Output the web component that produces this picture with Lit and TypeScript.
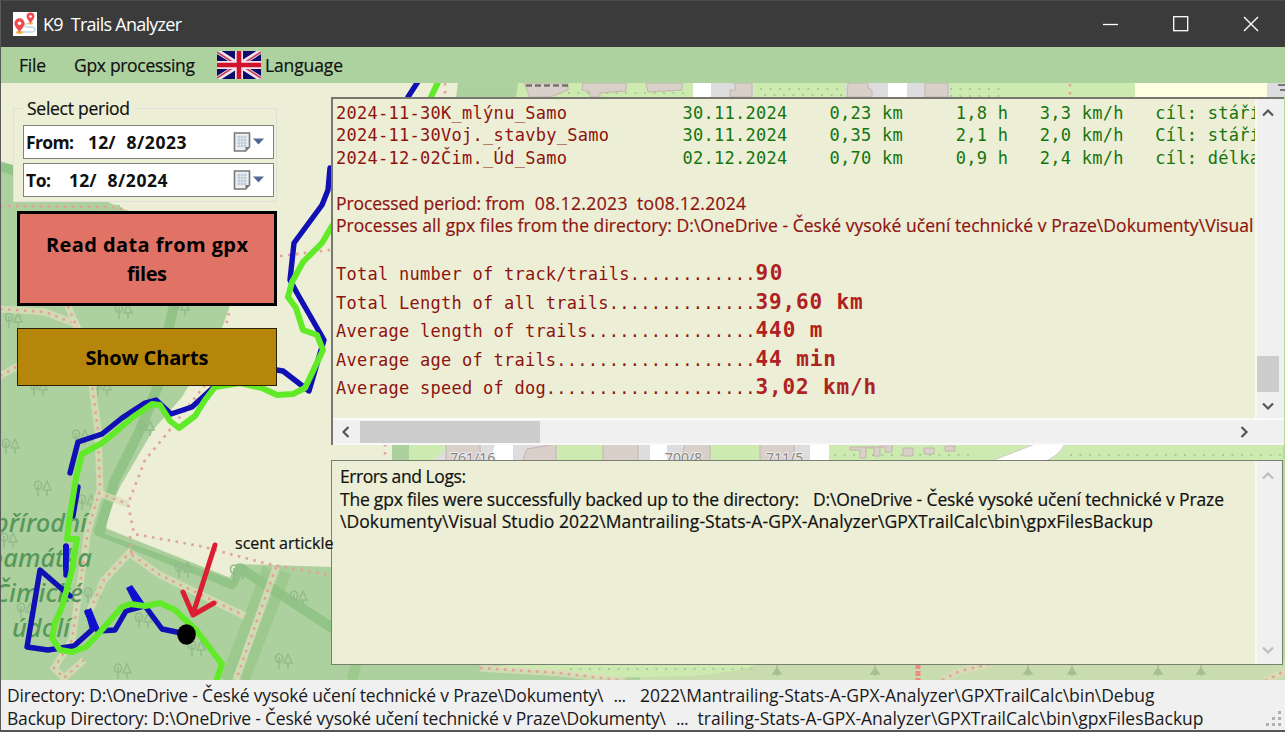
import { LitElement, html, css, svg } from "lit";
import { customElement, property } from "lit/decorators.js";

/** Text run whose tracking is adjusted so that it spans exactly `w` pixels. */
@customElement("fit-text")
class FitText extends LitElement {
  @property({ type: Number }) w = 0;
  @property() text = "";
  static styles = css`
    :host { display: inline-block; white-space: pre; flex: none; }
    span { display: inline-block; }
  `;
  firstUpdated() {
    const s = this.renderRoot.querySelector("span") as HTMLElement;
    const n = this.text.length;
    const natural = s.getBoundingClientRect().width;
    if (n > 1) s.style.letterSpacing = (this.w - natural) / (n - 1) + "px";
    this.style.width = this.w + "px";
  }
  render() {
    return html`<span>${this.text}</span>`;
  }
}

const t = (text: string, w: number) => html`<fit-text .w=${w} .text=${text}></fit-text>`;

/** Map background: woodland, field, paths, houses and the recorded tracks. */
@customElement("trail-map")
class TrailMap extends LitElement {
  static styles = css`
    :host { display: block; }
    svg { display: block; width: 100%; height: 100%; }
    .label { font: italic 500 25.5px "Noto Sans", sans-serif; fill: #56985a; text-anchor: end; }
    .num { font: 14px "Noto Sans", sans-serif; fill: #8b8582; stroke: #eee; stroke-width: 2px; paint-order: stroke; }
    .tree { fill: none; stroke: #93bb8a; stroke-width: 1.5; }
    .way { fill: none; stroke: #dcdcb9; stroke-width: 7; opacity: 0.75; }
    .dots { fill: none; stroke: #e2a398; stroke-width: 2.6; stroke-dasharray: 2.6 5.4; }
    .band { fill: none; stroke: #7fba77; opacity: 0.6; stroke-width: 10; stroke-linejoin: round; }
    .soft { fill: none; stroke: #8fc284; opacity: 0.55; stroke-width: 11; }
    .blue { fill: none; stroke: #1010b4; stroke-width: 5.4; stroke-linejoin: round; stroke-linecap: round; }
    .green { fill: none; stroke: #60ea28; stroke-width: 6; stroke-linejoin: round; stroke-linecap: round; }
    .arrow { fill: none; stroke: #dc1e32; stroke-width: 5; stroke-linecap: round; stroke-linejoin: round; }
    .house { fill: #d9d0c9; stroke: #c4b4ac; stroke-width: 1; }
    .yard { fill: #dddde0; }
    .meadow { fill: #cdebb0; }
    .grass { fill: none; stroke: #a8cf8e; stroke-width: 2; stroke-dasharray: 2 7.5; }
  `;
  tree(x: number, y: number) {
    return svg`<path class="tree" d="M${x - 4} ${y - 7}a3.6 4.2 0 1 0 .1 0M${x - 4} ${y - 4}v12M${x + 5} ${y - 7}l-4 9h8zM${x + 5} ${y + 2}v6"/>`;
  }
  path(d: string) {
    return svg`<path class="way" d=${d}/><path class="dots" d=${d}/>`;
  }
  render() {
    const trees = [[13, 320], [123, 311], [180, 308], [38, 388], [102, 388], [10, 446], [80, 437], [145, 428], [42, 488],
      [86, 502], [8, 540], [183, 570], [238, 572], [298, 598], [92, 595], [122, 671], [283, 661], [143, 620], [196, 648], [25, 610]];
    const conifers = [777, 875, 1028, 1158, 1201, 1072];
    return html`<svg viewBox="0 83 1285 597" preserveAspectRatio="none">
      <rect x="0" y="83" width="1285" height="597" fill="#add19e"/>
      <path fill="#eceed5" d="M0 83H460L440 460H391V567H333L236 564L232 580L105 534Q110 505 122 483L153 430L182 397L222 328L232 300L240 214H120V205H0Z"/>
      <path fill="#add19e" d="M0 163Q60 170 110 203L135 214H234L229 306L220 328L200 370L153 430L122 483L0 500Z"/>
      <path class="band" d="M0 166L15 171"/>
      <path class="band" d="M175 300L165 345L158 386L140 430L115 480L99 531L232 584L240 568L340 633"/>
      <path class="soft" d="M268 568L226 680M286 572L244 680"/>
      <path class="soft" d="M356 664L352 680"/>
      ${trees.map(([x, y]) => this.tree(x, y))}
      ${this.path("M0 309L45 312L76 324L90 370L98 430L100 490L88 530L72 640L54 668L64 678L84 660")}
      ${this.path("M68 306L78 330")}
      ${this.path("M0 376L18 366")}
      ${this.path("M98 493L128 504")}
      ${this.path("M132 550L104 580L90 610")}
      ${this.path("M132 555L160 575L245 616")}
      ${this.path("M276 567L236 680")}
      <path class="dots" d="M229 313L224 334M205 385L165 436L145 460L128 504L134 534L200 546L268 564L340 577M130 536L132 555M0 206L110 207L128 210M280 256L330 250"/>
      <text class="label" x="87" y="532">přírodní</text>
      <text class="label" x="92" y="567">památka</text>
      <text class="label" x="83" y="602">Čimické</text>
      <text class="label" x="70" y="637">údolí</text>

      <path fill="#add19e" d="M458 83H520V97H456Z"/>
      <path class="dots" d="M445 83V97M385 444V462"/>
      <path class="meadow" d="M518 83H1135V97H516Z"/>
      <path class="grass" d="M530 93H690M760 89H850M764 95H850M950 89H1000M950 96H1000"/>
      <path class="house" d="M524 83H568V90L550 97H530ZM583 83H626V91L600 93V97H590V92L582 90ZM646 83H682V90L648 92Z"/>
      <path fill="#fff" d="M693 83H711V97H693ZM888 83H907V97H888Z"/>
      <path class="yard" d="M711 83H754V97H711ZM846 83H888V97H846ZM907 83H950V97H907Z"/>
      <path class="house" d="M734 83H752V97H730V90H736ZM848 83H868V88L872 90V97H847ZM925 83H948V97H925Z"/>
      <path d="M526 85.500H568" stroke="#77706c" stroke-width="2.500" stroke-dasharray="6 3"/>
      <path class="dots" d="M1070 84V97"/>
      <path fill="#fffee0" d="M1135 83H1267V97H1135Z"/>
      <path fill="#dddde0" d="M1267 83H1285V97H1267Z"/>
      <path d="M1278 85h7M1280 90h5" stroke="#777" stroke-width="2"/>

      <path class="meadow" d="M421 444H1285V462H421Z"/>
      <path fill="#add19e" d="M392 444H409V462H392Z"/>
      <path class="grass" d="M412 455H430M560 455H603M712 455H760M834 455H975M1070 455H1285"/>
      <path class="meadow" d="M409 444H430V462H409Z"/>
      <path class="yard" d="M455 444H495V462H430ZM514 444H650V462H514ZM668 444H810V462H668Z"/>
      <path class="meadow" d="M558 444H603V462H558ZM710 444H760V462H710Z"/>
      <path class="house" d="M446 444H480V462H446ZM527 449L556 444V462H522ZM603 444H638V462H603ZM685 444H710V462H680ZM760 444H794V462H760Z"/>
      <path fill="#fff" d="M495 444H513V462H490ZM650 444H667V462H650ZM810 444H829V462H810Z"/>
      <text class="num" x="450" y="463">761/16</text>
      <text class="num" x="665" y="463">700/8</text>
      <text class="num" x="766" y="463">711/5</text>
      <path class="house" d="M850 447H885V452H892V444H880V456H874V448H866V458H860V450H850ZM903 448H913V456H903ZM924 448H934V454H924ZM945 446H955V451H945Z"/>
      <path fill="#fff" stroke="#d0ccca" d="M989 462L1035 444H1065Q1058 457 1043 462Z"/>
      <rect x="1283" y="97" width="2" height="567" fill="#b9d8a0"/>

      <path fill="#c8dcae" d="M640 660H1285V680H640Z"/>
      <path class="meadow" d="M520 662H765Q740 672 690 676L600 678Q560 670 490 668Z"/>
      <path class="grass" d="M570 669H760"/>
      ${this.path("M480 668L560 673L625 681")}
      ${this.path("M942 680L960 671L990 664")}
      ${this.path("M1265 681L1285 671")}
      <path d="M918 664V680" stroke="#f08a82" stroke-width="5" stroke-dasharray="5 2"/>
      ${conifers.map((x) => svg`<path d="M${x} 664v12m-4 -2h8l-4 -6z" fill="#a5bf90" stroke="#a5bf90" stroke-width="1.5"/>`)}

      <path class="blue" d="M419 80L408 97M330 168L328 190L322 205L294 243L290 280L297 293L324 340L309 391L283 371L270 369M215 386L192 407L171 414L156 400L145 403L122 418L102 434L78 442L70 473M78 487L73 516M66 546V575M70 596L40 570L27 647L48 650L74 646L94 628L87 612L98 631L115 630L126 611L145 606L162 629L186 634"/>
      <path fill="#1010d0" d="M85 611L91 608L100 630L90 630ZM126 588L132 585L145 604L134 604ZM63 545H69L68 575L63 570Z"/>
      <path class="green" d="M439 80L431 97M332 226L322 243L303 262L292 282L288 297L296 308L303 330L317 335L323 350L305 388L293 394L277 395L262 388L240 383L215 387L205 400L195 416L179 428L170 421L160 405L152 404L133 417L112 435L102 443L82 454L76 478L70 515L67 539L77 539L72 570L62 607L55 623L52 638L60 650L72 652L86 647L100 632L122 607L130 604L145 606L160 603L175 610L196 630L222 664L217 679"/>
      <path class="arrow" d="M215 545L193 614M183 592L193 615L214 603"/>
      <ellipse cx="186.500" cy="634.500" rx="9.300" ry="10.300" fill="#000"/>
    </svg>`;
  }
}

const chev = (d: string, c = "#555") =>
  html`<svg width="12" height="12" viewBox="0 0 12 12"><path d=${d} fill="none" stroke=${c} stroke-width="2.2"/></svg>`;
const UP = "M1 8.500L6 3.500L11 8.500";
const DOWN = "M1 3.500L6 8.500L11 3.500";
const LEFT = "M8.500 1L3.500 6L8.500 11";
const RIGHT = "M3.500 1L8.500 6L3.500 11";

const pin = (x: number, y: number, k: number) =>
  svg`<g transform="translate(${x} ${y}) scale(${k})"><ellipse cx="0" cy="0" rx="3.500" ry="1.400" fill="#f2b24a"/><path d="M0 0C-2 -4 -5 -5.500 -5 -9A5 5 0 0 1 5 -9C5 -5.500 2 -4 0 0Z" fill="#ef4a4f"/><circle cx="0" cy="-9" r="1.700" fill="#fff"/></g>`;

@customElement("app-root")
class AppRoot extends LitElement {
  static styles = css`
    :host { display: block; width: 1285px; height: 732px; overflow: hidden; font: 17.5px/22px "Open Sans", "Noto Sans", sans-serif; color: #111; -webkit-text-stroke: 0.2px currentColor; }
    * { box-sizing: border-box; }
    .window { display: flex; flex-direction: column; height: 732px; border-left: 1px solid #5b5b5b; border-bottom: 2px solid #555; border-top: 1px solid #4b4b4b; }
    .titlebar { flex: none; height: 46px; background: #3b3b3b; color: #fff; display: flex; align-items: center; padding-left: 12px; font-size: 18px; -webkit-text-stroke: 0; }
    .titlebar fit-text { margin-left: 6px; }
    .controls { margin-left: auto; display: flex; gap: 54px; padding-right: 26px; }
    .menu { flex: none; height: 36px; background: #add29f; display: flex; align-items: center; padding-left: 18px; }
    .menu .gpx { margin-left: 28px; }
    .menu svg { margin: 0 4px 0 22px; display: block; }
    .stage { flex: none; height: 597px; display: grid; overflow: hidden; }
    .stage > * { grid-area: 1 / 1; min-width: 0; min-height: 0; }
    .stage trail-map { margin-left: -1px; width: 1285px; }
    .content { display: flex; position: relative; z-index: 1; }
    .left { width: 330px; flex: none; padding: 13px 0 0 12px; display: flex; flex-direction: column; }
    fieldset { margin: 0; border: 1px solid #dfe0d8; width: 264px; height: 106px; padding: 5px 2px 0 9px; background: #eceed5; display: flex; flex-direction: column; gap: 4px; min-width: 0; }
    legend { padding: 0 4px; margin-left: 0; line-height: 24px; }
    .picker { flex: none; height: 34px; width: 251px; border: 1.5px solid #82827c; background: #fff; display: flex; align-items: center; font-weight: 700; padding: 0 8px 0 2px; -webkit-text-stroke: 0; }
    .picker .date { margin-left: 14px; }
    .picker .to { margin-left: 18px; }
    .picker .year { margin-left: 11px; }
    .picker svg { margin-left: auto; }
    .btn { width: 260px; margin-left: 4px; display: flex; flex-direction: column; align-items: center; justify-content: center; font-weight: 700; font-size: 20px; line-height: 29px; color: #000; -webkit-text-stroke: 0; }
    .read { height: 95px; margin-top: 9px; background: #e17366; border: 3px solid #000; }
    .charts { height: 58px; margin-top: 22px; background: #b6860b; border: 1.5px solid #2a2000; }
    .right { padding-top: 14px; width: 953px; flex: none; display: flex; flex-direction: column; }
    .results { height: 348px; border: 2px solid #77776f; border-width: 2px 0 0 2px; background: #eceed5; display: flex; flex-direction: column; }
    .row { display: flex; flex: 1; min-height: 0; }
    .viewport { width: 922px; flex: none; overflow: hidden; padding: 2.500px 0 0 3px; color: #8e1310; }
    .line { height: 22.5px; line-height: 22.5px; display: flex; }
    .mono { font-family: "DejaVu Sans Mono", monospace; font-size: 17px; -webkit-text-stroke: 0; }
    .num { color: #14750f; }
    .stats { padding-top: 22.5px; }
    .stat { height: 28.5px; display: flex; align-items: baseline; line-height: 28px; }
    .stat .val { font-size: 21px; font-weight: 700; color: #b02121; }
    .vscroll { width: 29px; flex: none; border-left: 2px solid #f8f8f4; background: #f0f0f0; display: flex; flex-direction: column; align-items: center; justify-content: space-between; padding: 8px 6px 6px 0; }
    .vtail { display: flex; flex-direction: column; align-items: center; gap: 8px; }
    .vthumb { width: 22px; height: 36px; background: #cdcdcd; }
    .hscroll { height: 27px; background: #f0f0f0; border-top: 2px solid #fafaf6; border-bottom: 2px solid #f8f8f8; display: flex; align-items: center; padding: 0 34px 0 7px; justify-content: space-between; }
    .hhead { display: flex; align-items: center; gap: 8px; }
    .hthumb { width: 180px; height: 22px; background: #cdcdcd; }
    .logs { margin-top: 15px; height: 205px; border: 1.5px solid #7a7f73; background: #eceed5; display: flex; width: 952px; }
    .logtext { width: 923px; flex: none; padding: 4px 0 0 8px; line-height: 22.5px; }
    .logline { display: flex; gap: 14px; height: 22.5px; }
    .vscroll.off { width: 27px; padding: 9px 3px 8px 0; }
    .scent { position: absolute; left: 232px; top: 450px; height: 20px; line-height: 20px; font-size: 16px; padding-left: 2px; }
    .scent::after { content: ""; position: absolute; z-index: -1; right: -1px; top: 0; width: 6px; height: 20px; background: #eceed5; }
    .status { flex: 1; background: #f0f0f0; display: flex; justify-content: space-between; padding: 4px 2px 0 6px; color: #1a1a1a; -webkit-text-stroke: 0; }
    .status .sl { display: flex; height: 22.5px; }
    .status .dots1 { margin: 0 14px 0 10px; }
    .status .dots2 { margin: 0 9px 0 10px; }
    .grip { align-self: flex-end; margin-bottom: 2px; }
  `;
  picker(label: string, lw: number, year: string, cls: string) {
    return html`<div class="picker">${t(label, lw)}<span class=${cls}>${t("12/", 27.5)}</span><span class="year">${t(year, 60)}</span>
      <svg width="32" height="20" viewBox="0 0 32 20"><path d="M1.500 1h15v14l-4 4h-11z" fill="#edf0f2" stroke="#777" stroke-width="1.600"/><path d="M4 5h10M4 8h10M4 11h10M4 14h10M6 3.500v12M9 3.500v12M12 3.500v12" stroke="#b4c4d2" stroke-width="1"/><path d="M12.500 19v-4h4z" fill="#777"/><path d="M20 6.500h11l-5.500 6z" fill="#4e6a94"/></svg></div>`;
  }
  render() {
    const rows = [
      ["2024-11-30K_mlýnu_Samo", "0,23 km     1,8 h   3,3 km/h   cíl: stáří", "30.11.2024"],
      ["2024-11-30Voj._stavby_Samo", "0,35 km     2,1 h   2,0 km/h   Cíl: stáří", "30.11.2024"],
      ["2024-12-02Čim._Úd_Samo", "0,70 km     0,9 h   2,4 km/h   cíl: délka", "02.12.2024"],
    ];
    const stats = [
      ["Total number of track/trails", "90"],
      ["Total Length of all trails", "39,60 km"],
      ["Average length of trails", "440 m"],
      ["Average age of trails", "44 min"],
      ["Average speed of dog", "3,02 km/h"],
    ];
    return html`<div class="window">
      <div class="titlebar">
        <svg width="24" height="24" viewBox="0 0 24 24"><rect width="24" height="24" fill="#fff"/><path d="M7 20H18Q22 20 22 17.500Q22 15 18 15H14Q11 15 12 12.500L17 11" fill="none" stroke="#cfe0ea" stroke-width="1.800"/>${pin(6.5, 20.5, 1.02)}${pin(17.5, 11.5, 0.78)}</svg>
        ${t("K9  Trails Analyzer", 139)}
        <div class="controls">
          <svg width="16" height="16" viewBox="0 0 16 16"><path d="M0 8.500h15" stroke="#fff" stroke-width="1.300"/></svg>
          <svg width="16" height="16" viewBox="0 0 16 16"><rect x=".7" y=".7" width="14" height="14" fill="none" stroke="#fff" stroke-width="1.300"/></svg>
          <svg width="16" height="16" viewBox="0 0 16 16"><path d="M1 1l14 14M15 1L1 15" stroke="#fff" stroke-width="1.400"/></svg>
        </div>
      </div>
      <div class="menu">
        ${t("File", 27)}<span class="gpx">${t("Gpx processing", 121)}</span>
        <svg width="44" height="28" viewBox="0 0 44 28"><rect width="44" height="28" fill="#0d0c6b"/><path d="M0 0L44 28M44 0L0 28" stroke="#efe4ee" stroke-width="5"/><path d="M0 1L20 14M44 1L24 14M0 27L20 14M44 27L24 14" stroke="#c5405c" stroke-width="1.600"/><path d="M22 0V28M0 14H44" stroke="#efe4ee" stroke-width="8"/><path d="M22 0V28M0 14H44" stroke="#d1122c" stroke-width="4.600"/></svg>
        ${t("Language", 78)}
      </div>
      <div class="stage">
        <trail-map></trail-map>
        <div class="content">
          <div class="left">
            <fieldset>
              <legend>${t("Select period", 103)}</legend>
              ${this.picker("From:", 48, "8/2023", "date")}
              ${this.picker("To:", 25, "8/2024", "to")}
            </fieldset>
            <div class="btn read">${t("Read data from gpx", 202)}${t("files", 40)}</div>
            <div class="btn charts">${t("Show Charts", 123)}</div>
          </div>
          <div class="right">
            <div class="results">
              <div class="row">
                <div class="viewport">
                  ${rows.map(([n, v, d]) => {
                    const rest = d + "    " + v;
                    return html`<div class="line mono">${t(n.padEnd(33), 346.5)}<span class="num">${t(rest, rest.length * 10.5)}</span></div>`;
                  })}
                  <div class="line"></div>
                  <div class="line">${t("Processed period: from", 189)}<span>${t("  08.12.2023", 102.5)}</span>${t("  to08.12.2024", 118.5)}</div>
                  <div class="line">${t("Processes all gpx files from the directory: D:\\OneDrive - České vysoké učení technické v Praze\\Dokumenty\\Visual", 917.5)}</div>
                  <div class="stats">
                    ${stats.map(([a, b]) => html`<div class="stat mono">${t(a.padEnd(40, "."), 419.5)}<span class="val">${t(b, b.length * 13.4)}</span></div>`)}
                  </div>
                </div>
                <div class="vscroll">${chev(UP)}<div class="vtail"><div class="vthumb"></div>${chev(DOWN)}</div></div>
              </div>
              <div class="hscroll"><div class="hhead">${chev(LEFT)}<div class="hthumb"></div></div>${chev(RIGHT)}</div>
            </div>
            <div class="logs">
              <div class="logtext">
                <div class="logline">${t("Errors and Logs:", 126)}</div>
                <div class="logline">${t("The gpx files were successfully backed up to the directory:", 459)}${t("D:\\OneDrive - České vysoké učení technické v Praze", 411)}</div>
                <div class="logline">${t("\\Dokumenty\\Visual Studio 2022\\Mantrailing-Stats-A-GPX-Analyzer\\GPXTrailCalc\\bin\\gpxFilesBackup", 813)}</div>
              </div>
              <div class="vscroll off">${chev(UP, "#bdbdbd")}${chev(DOWN, "#bdbdbd")}</div>
            </div>
          </div>
          <div class="scent">${t("scent artickle", 98.5)}</div>
        </div>
      </div>
      <div class="status">
        <div>
          <div class="sl">${t("Directory: D:\\OneDrive - České vysoké učení technické v Praze\\Dokumenty\\", 596.5)}<span class="dots1">${t("...", 12.5)}</span>${t("2022\\Mantrailing-Stats-A-GPX-Analyzer\\GPXTrailCalc\\bin\\Debug", 514.5)}</div>
          <div class="sl">${t("Backup Directory: D:\\OneDrive - České vysoké učení technické v Praze\\Dokumenty\\", 659)}<span class="dots2">${t("...", 12.5)}</span>${t("trailing-Stats-A-GPX-Analyzer\\GPXTrailCalc\\bin\\gpxFilesBackup", 506)}</div>
        </div>
        <svg class="grip" width="18" height="18" viewBox="0 0 18 18"><path d="M13 1h3v3h-3zM7 7h3v3h-3zM13 7h3v3h-3zM1 13h3v3h-3zM7 13h3v3h-3zM13 13h3v3h-3z" fill="#b0b0b0"/></svg>
      </div>
    </div>`;
  }
}
